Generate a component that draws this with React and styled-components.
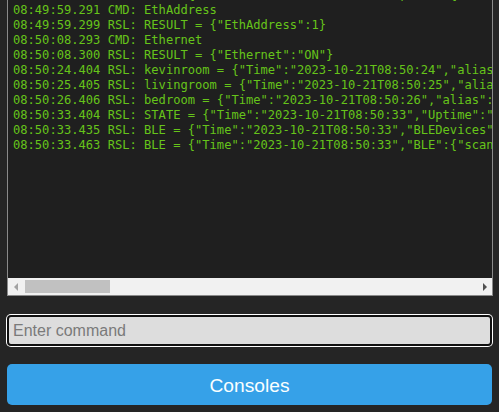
import React from 'react';
import styled, { createGlobalStyle } from 'styled-components';

const lines = [
  '08:49:58.962 RSL: BLE = {"Time":"2023-10-21T08:49:58","BLE":{"scan"',
  '08:49:59.291 CMD: EthAddress',
  '08:49:59.299 RSL: RESULT = {"EthAddress":1}',
  '08:50:08.293 CMD: Ethernet',
  '08:50:08.300 RSL: RESULT = {"Ethernet":"ON"}',
  '08:50:24.404 RSL: kevinroom = {"Time":"2023-10-21T08:50:24","alias":"kevinroom"}',
  '08:50:25.405 RSL: livingroom = {"Time":"2023-10-21T08:50:25","alias":"livingroom"}',
  '08:50:26.406 RSL: bedroom = {"Time":"2023-10-21T08:50:26","alias":"bedroom"}',
  '08:50:33.404 RSL: STATE = {"Time":"2023-10-21T08:50:33","Uptime":"0T00:12:41"}',
  '08:50:33.435 RSL: BLE = {"Time":"2023-10-21T08:50:33","BLEDevices":{"total":3}}',
  '08:50:33.463 RSL: BLE = {"Time":"2023-10-21T08:50:33","BLE":{"scans":12}}',
];

const GlobalStyle = createGlobalStyle`
body {
  margin: 0;
  background: #252525;
  font-family: "Liberation Sans", Arial, sans-serif;
}
`;

const Page = styled.div`
display: flex;
flex-direction: column;
padding: 0 6px 0 7px;
`;

const Console = styled.div`
display: flex;
flex-direction: column;
background: #1f1f1f;
border: 1px solid #8a8a8a;
border-top: 0;
`;

const Log = styled.div`
height: 278px;
overflow: hidden;
padding-left: 5px;
`;

const Lines = styled.pre`
margin: -12px 0 0 0;
font-family: "DejaVu Sans Mono", monospace;
font-size: 12.1px;
line-height: 15px;
color: #66c41a;
white-space: pre;
`;

const HScroll = styled.div`
display: flex;
align-items: center;
height: 17px;
background: #f1f1f1;
`;

const Arrow = styled.span`
width: 0;
height: 0;
margin: 0 5px 0 ${(p) => (p.right ? 'auto' : '6px')};
border-top: 4px solid transparent;
border-bottom: 4px solid transparent;
border-left: ${(p) => (p.right ? '4px solid #505050' : '0')};
border-right: ${(p) => (p.right ? '0' : '4px solid #a3a3a3')};
`;

const Thumb = styled.span`
width: 85px;
height: 13px;
margin-left: 2px;
background: #c1c1c1;
`;

const Command = styled.input`
box-sizing: border-box;
margin: 19px 1px 0 0;
height: 31px;
padding: 0 4px;
background: #dddddd;
border: 2px solid #101010;
border-radius: 4px;
box-shadow: 0 0 0 1px #ffffff;
outline: none;
font-family: "Liberation Sans", Arial, sans-serif;
font-size: 16px;
color: #000;
&::placeholder {
  color: #7a7a7a;
}
`;

const Button = styled.button`
margin: 18px 1px 0 0;
height: 41px;
border: 0;
border-radius: 5px;
background: #36a1e8;
color: #faffff;
font-family: "Liberation Sans", Arial, sans-serif;
font-size: 19.2px;
line-height: 41px;
cursor: pointer;
`;

const App = () => (
  <>
    <GlobalStyle />
    <Page>
      <Console>
        <Log>
          <Lines>{lines.join('\n')}</Lines>
        </Log>
        <HScroll>
          <Arrow />
          <Thumb />
          <Arrow right />
        </HScroll>
      </Console>
      <Command placeholder="Enter command" />
      <Button>Consoles</Button>
    </Page>
  </>
);

export default App;
